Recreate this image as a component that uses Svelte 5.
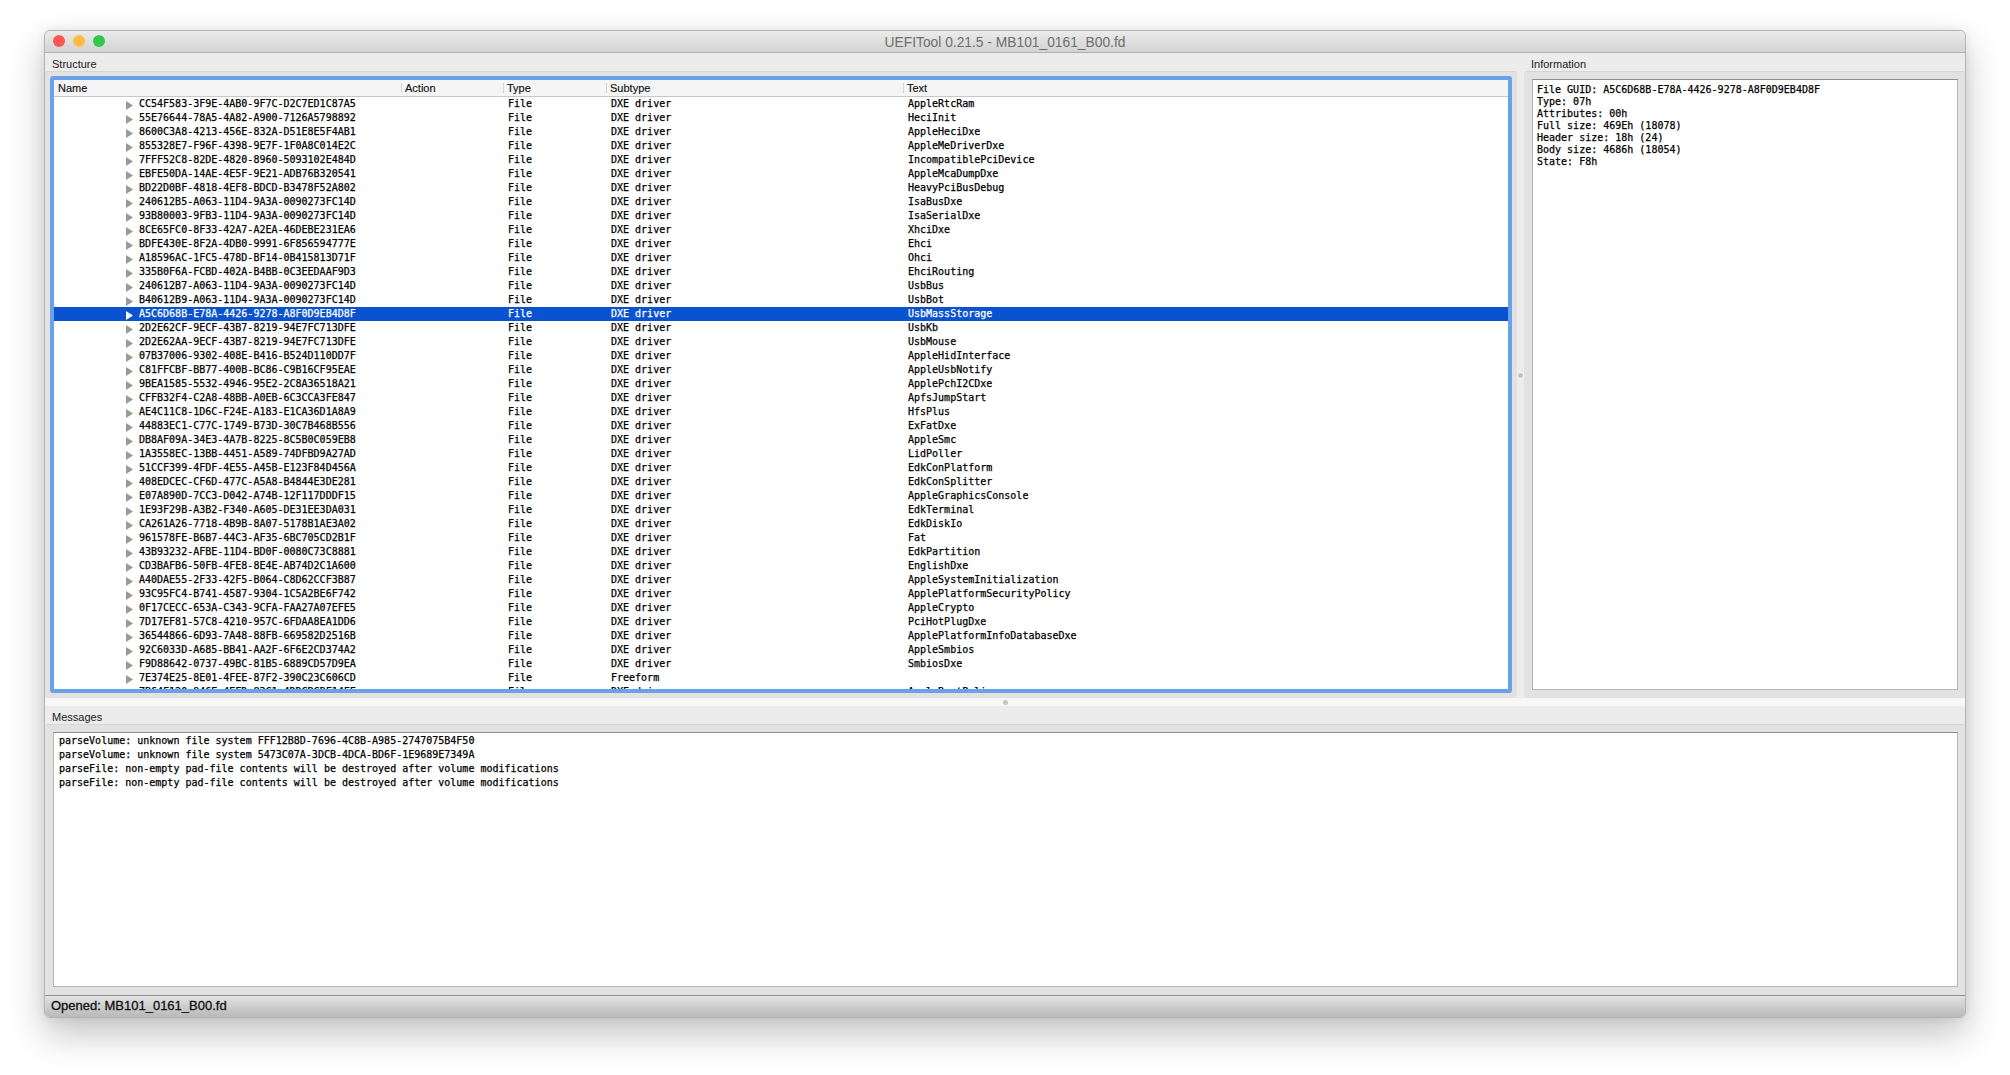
<script>
  const rows = [
    ["CC54F583-3F9E-4AB0-9F7C-D2C7ED1C87A5", "DXE driver", "AppleRtcRam"],
    ["55E76644-78A5-4A82-A900-7126A5798892", "DXE driver", "HeciInit"],
    ["8600C3A8-4213-456E-832A-D51E8E5F4AB1", "DXE driver", "AppleHeciDxe"],
    ["855328E7-F96F-4398-9E7F-1F0A8C014E2C", "DXE driver", "AppleMeDriverDxe"],
    ["7FFF52C8-82DE-4820-8960-5093102E484D", "DXE driver", "IncompatiblePciDevice"],
    ["EBFE50DA-14AE-4E5F-9E21-ADB76B320541", "DXE driver", "AppleMcaDumpDxe"],
    ["BD22D0BF-4818-4EF8-BDCD-B3478F52A802", "DXE driver", "HeavyPciBusDebug"],
    ["240612B5-A063-11D4-9A3A-0090273FC14D", "DXE driver", "IsaBusDxe"],
    ["93B80003-9FB3-11D4-9A3A-0090273FC14D", "DXE driver", "IsaSerialDxe"],
    ["8CE65FC0-8F33-42A7-A2EA-46DEBE231EA6", "DXE driver", "XhciDxe"],
    ["BDFE430E-8F2A-4DB0-9991-6F856594777E", "DXE driver", "Ehci"],
    ["A18596AC-1FC5-478D-BF14-0B415813D71F", "DXE driver", "Ohci"],
    ["335B0F6A-FCBD-402A-B4BB-0C3EEDAAF9D3", "DXE driver", "EhciRouting"],
    ["240612B7-A063-11D4-9A3A-0090273FC14D", "DXE driver", "UsbBus"],
    ["B40612B9-A063-11D4-9A3A-0090273FC14D", "DXE driver", "UsbBot"],
    ["A5C6D68B-E78A-4426-9278-A8F0D9EB4D8F", "DXE driver", "UsbMassStorage"],
    ["2D2E62CF-9ECF-43B7-8219-94E7FC713DFE", "DXE driver", "UsbKb"],
    ["2D2E62AA-9ECF-43B7-8219-94E7FC713DFE", "DXE driver", "UsbMouse"],
    ["07B37006-9302-408E-B416-B524D110DD7F", "DXE driver", "AppleHidInterface"],
    ["C81FFCBF-BB77-400B-BC86-C9B16CF95EAE", "DXE driver", "AppleUsbNotify"],
    ["9BEA1585-5532-4946-95E2-2C8A36518A21", "DXE driver", "ApplePchI2CDxe"],
    ["CFFB32F4-C2A8-48BB-A0EB-6C3CCA3FE847", "DXE driver", "ApfsJumpStart"],
    ["AE4C11C8-1D6C-F24E-A183-E1CA36D1A8A9", "DXE driver", "HfsPlus"],
    ["44883EC1-C77C-1749-B73D-30C7B468B556", "DXE driver", "ExFatDxe"],
    ["DB8AF09A-34E3-4A7B-8225-8C5B0C059EB8", "DXE driver", "AppleSmc"],
    ["1A3558EC-13BB-4451-A589-74DFBD9A27AD", "DXE driver", "LidPoller"],
    ["51CCF399-4FDF-4E55-A45B-E123F84D456A", "DXE driver", "EdkConPlatform"],
    ["408EDCEC-CF6D-477C-A5A8-B4844E3DE281", "DXE driver", "EdkConSplitter"],
    ["E07A890D-7CC3-D042-A74B-12F117DDDF15", "DXE driver", "AppleGraphicsConsole"],
    ["1E93F29B-A3B2-F340-A605-DE31EE3DA031", "DXE driver", "EdkTerminal"],
    ["CA261A26-7718-4B9B-8A07-5178B1AE3A02", "DXE driver", "EdkDiskIo"],
    ["961578FE-B6B7-44C3-AF35-6BC705CD2B1F", "DXE driver", "Fat"],
    ["43B93232-AFBE-11D4-BD0F-0080C73C8881", "DXE driver", "EdkPartition"],
    ["CD3BAFB6-50FB-4FE8-8E4E-AB74D2C1A600", "DXE driver", "EnglishDxe"],
    ["A40DAE55-2F33-42F5-B064-C8D62CCF3B87", "DXE driver", "AppleSystemInitialization"],
    ["93C95FC4-B741-4587-9304-1C5A2BE6F742", "DXE driver", "ApplePlatformSecurityPolicy"],
    ["0F17CECC-653A-C343-9CFA-FAA27A07EFE5", "DXE driver", "AppleCrypto"],
    ["7D17EF81-57C8-4210-957C-6FDAA8EA1DD6", "DXE driver", "PciHotPlugDxe"],
    ["36544866-6D93-7A48-88FB-669582D2516B", "DXE driver", "ApplePlatformInfoDatabaseDxe"],
    ["92C6033D-A685-BB41-AA2F-6F6E2CD374A2", "DXE driver", "AppleSmbios"],
    ["F9D88642-0737-49BC-81B5-6889CD57D9EA", "DXE driver", "SmbiosDxe"],
    ["7E374E25-8E01-4FEE-87F2-390C23C606CD", "Freeform", ""],
    ["7B64F120-946E-4EFD-83C1-4DDCBCBF14FF", "DXE driver", "AppleBootPolicy"]
  ];
  const selected = 15;
  const info = [
    "File GUID: A5C6D68B-E78A-4426-9278-A8F0D9EB4D8F",
    "Type: 07h",
    "Attributes: 00h",
    "Full size: 469Eh (18078)",
    "Header size: 18h (24)",
    "Body size: 4686h (18054)",
    "State: F8h"
  ];
  const messages = [
    "parseVolume: unknown file system FFF12B8D-7696-4C8B-A985-2747075B4F50",
    "parseVolume: unknown file system 5473C07A-3DCB-4DCA-BD6F-1E9689E7349A",
    "parseFile: non-empty pad-file contents will be destroyed after volume modifications",
    "parseFile: non-empty pad-file contents will be destroyed after volume modifications"
  ];
  const headers = ["Name", "Action", "Type", "Subtype", "Text"];
</script>

<div class="page">
  <div class="window">
    <header class="titlebar">
      <div class="lights">
        <span class="light red"></span>
        <span class="light yellow"></span>
        <span class="light green"></span>
      </div>
      <div class="title">UEFITool 0.21.5 - MB101_0161_B00.fd</div>
    </header>

    <section class="top">
      <div class="pane left">
        <div class="label">Structure</div>
        <div class="group">
          <div class="focus">
            <div class="tree">
              <div class="thead cols">
                {#each headers as h}
                  <div class="th">{h}</div>
                {/each}
              </div>
              <div class="tbody">
                {#each rows as r, i}
                  <div class="row cols" class:sel={i === selected}>
                    <div class="name">
                      <svg class="arrow" viewBox="0 0 7 9" width="7" height="9"><path d="M0 0 L7 4.5 L0 9 Z" /></svg>
                      <span>{r[0]}</span>
                    </div>
                    <div></div>
                    <div class="cell">File</div>
                    <div class="cell">{r[1]}</div>
                    <div class="cell">{r[2]}</div>
                  </div>
                {/each}
              </div>
            </div>
          </div>
        </div>
      </div>
      <div class="vsplit"><span class="vhandle"></span></div>
      <div class="pane right">
        <div class="label">Information</div>
        <div class="group pad">
          <div class="box info">
            {#each info as l}
              <div>{l}</div>
            {/each}
          </div>
        </div>
      </div>
    </section>

    <div class="hsplit"><span class="hhandle"></span></div>

    <section class="bottom">
      <div class="label msg">Messages</div>
      <div class="group pad2">
        <div class="box messages">
          {#each messages as m}
            <div>{m}</div>
          {/each}
        </div>
      </div>
    </section>

    <footer class="status">Opened: MB101_0161_B00.fd</footer>
  </div>
</div>

<style>
  :global(body) {
    margin: 0;
    background: #fff;
  }
  .page {
    width: 2010px;
    height: 1075px;
    padding: 30px 0 0 44px;
    box-sizing: border-box;
    overflow: hidden;
  }
  .window {
    width: 1922px;
    height: 988px;
    box-sizing: border-box;
    border: 1px solid #b4b4b4;
    border-radius: 6px;
    background: #ececec;
    display: flex;
    flex-direction: column;
    overflow: hidden;
    box-shadow: 0 16px 36px rgba(0, 0, 0, 0.24), 0 0 10px rgba(0, 0, 0, 0.08);
    font-family: "Liberation Sans", Arial, sans-serif;
  }
  .titlebar {
    height: 22px;
    box-sizing: border-box;
    padding-top: 1px;
    flex: none;
    display: flex;
    align-items: center;
    justify-content: center;
    position: relative;
    background: linear-gradient(#ebebeb, #d3d3d3);
    border-bottom: 1px solid #b1b1b1;
  }
  .lights {
    position: absolute;
    left: 8px;
    top: 4px;
    display: flex;
    gap: 8px;
  }
  .light {
    width: 12px;
    height: 12px;
    border-radius: 50%;
  }
  .red { background: #fc5753; }
  .yellow { background: #fdbc40; }
  .green { background: #34c84a; }
  .title {
    font-size: 13.8px;
    color: #6e6e6e;
  }
  .top {
    height: 645px;
    flex: none;
    display: flex;
  }
  .pane {
    display: flex;
    flex-direction: column;
  }
  .pane.left { width: 1472px; flex: none; }
  .pane.right { flex: 1; }
  .label {
    height: 18px;
    flex: none;
    padding-left: 7px;
    font-size: 11px;
    line-height: 22px;
    color: #222;
  }
  .group {
    flex: 1;
    min-height: 0;
    background: #e2e2e2;
    border-top: 1px solid #d6d6d6;
    border-radius: 3px;
    box-sizing: border-box;
  }
  .left .group {
    padding: 4px 5px 5px;
  }
  .focus {
    height: 100%;
    box-sizing: border-box;
    border: 4px solid #6aa2ea;
    border-radius: 3px;
  }
  .tree {
    height: 100%;
    background: #fff;
    overflow: hidden;
    display: flex;
    flex-direction: column;
  }
  .cols {
    display: grid;
    grid-template-columns: 347px 102px 103px 297px 1fr;
  }
  .thead {
    height: 17px;
    flex: none;
    box-sizing: border-box;
    background: #f5f5f5;
    border-bottom: 1px solid #c8c8c8;
  }
  .th {
    font-size: 11px;
    line-height: 16px;
    padding-left: 4px;
    color: #111;
    position: relative;
    -webkit-text-stroke: 0.15px #111;
  }
  .th + .th::before {
    content: "";
    position: absolute;
    left: 0;
    top: 3px;
    height: 10px;
    width: 1px;
    background: #d2d2d2;
  }
  .tbody {
    flex: 1;
    min-height: 0;
    overflow: hidden;
  }
  .row {
    height: 14px;
    font-family: "DejaVu Sans Mono", "Liberation Mono", monospace;
    font-size: 10px;
    line-height: 14px;
    color: #000;
    white-space: pre;
    -webkit-text-stroke: 0.25px currentColor;
  }
  .row.sel {
    background: #0a53d0;
    color: #fff;
  }
  .name {
    display: flex;
    align-items: center;
    padding-left: 72px;
    gap: 6px;
  }
  .arrow {
    flex: none;
    fill: #999;
    margin-top: 2px;
  }
  .sel .arrow { fill: #fff; }
  .cell { padding-left: 5px; }
  .vsplit {
    width: 7px;
    flex: none;
    display: flex;
    align-items: center;
    justify-content: center;
    background: #ececec;
  }
  .vhandle {
    width: 5px;
    height: 5px;
    border-radius: 50%;
    background: #c2c2c2;
    box-shadow: 0 0 0 1px #f7f7f7;
  }
  .box {
    box-sizing: border-box;
    height: 100%;
    background: #fff;
    border: 1px solid #b6b6b6;
    border-top-color: #8e8e8e;
    font-family: "DejaVu Sans Mono", "Liberation Mono", monospace;
    font-size: 10px;
    color: #000;
    white-space: pre;
    -webkit-text-stroke: 0.25px #000;
  }
  .group.pad { padding: 7px 7px 8px 8px; }
  .info {
    padding: 4px 4px;
    line-height: 12px;
  }
  .hsplit {
    height: 8px;
    flex: none;
    background: #f7f7f7;
    position: relative;
  }
  .hhandle {
    position: absolute;
    left: 958px;
    top: 2px;
    width: 5px;
    height: 5px;
    border-radius: 50%;
    background: #c8c8c8;
  }
  .bottom {
    height: 289px;
    flex: none;
    display: flex;
    flex-direction: column;
  }
  .group.pad2 { padding: 7px 7px 8px 8px; }
  .messages {
    padding: 1px 5px;
    line-height: 14px;
  }
  .status {
    flex: 1;
    box-sizing: border-box;
    border-top: 1px solid #8f8f8f;
    background: linear-gradient(#e2e2e2, #b9b9b9);
    padding-left: 6px;
    font-size: 13px;
    line-height: 20px;
    color: #111;
    -webkit-text-stroke: 0.3px #111;
  }
</style>
